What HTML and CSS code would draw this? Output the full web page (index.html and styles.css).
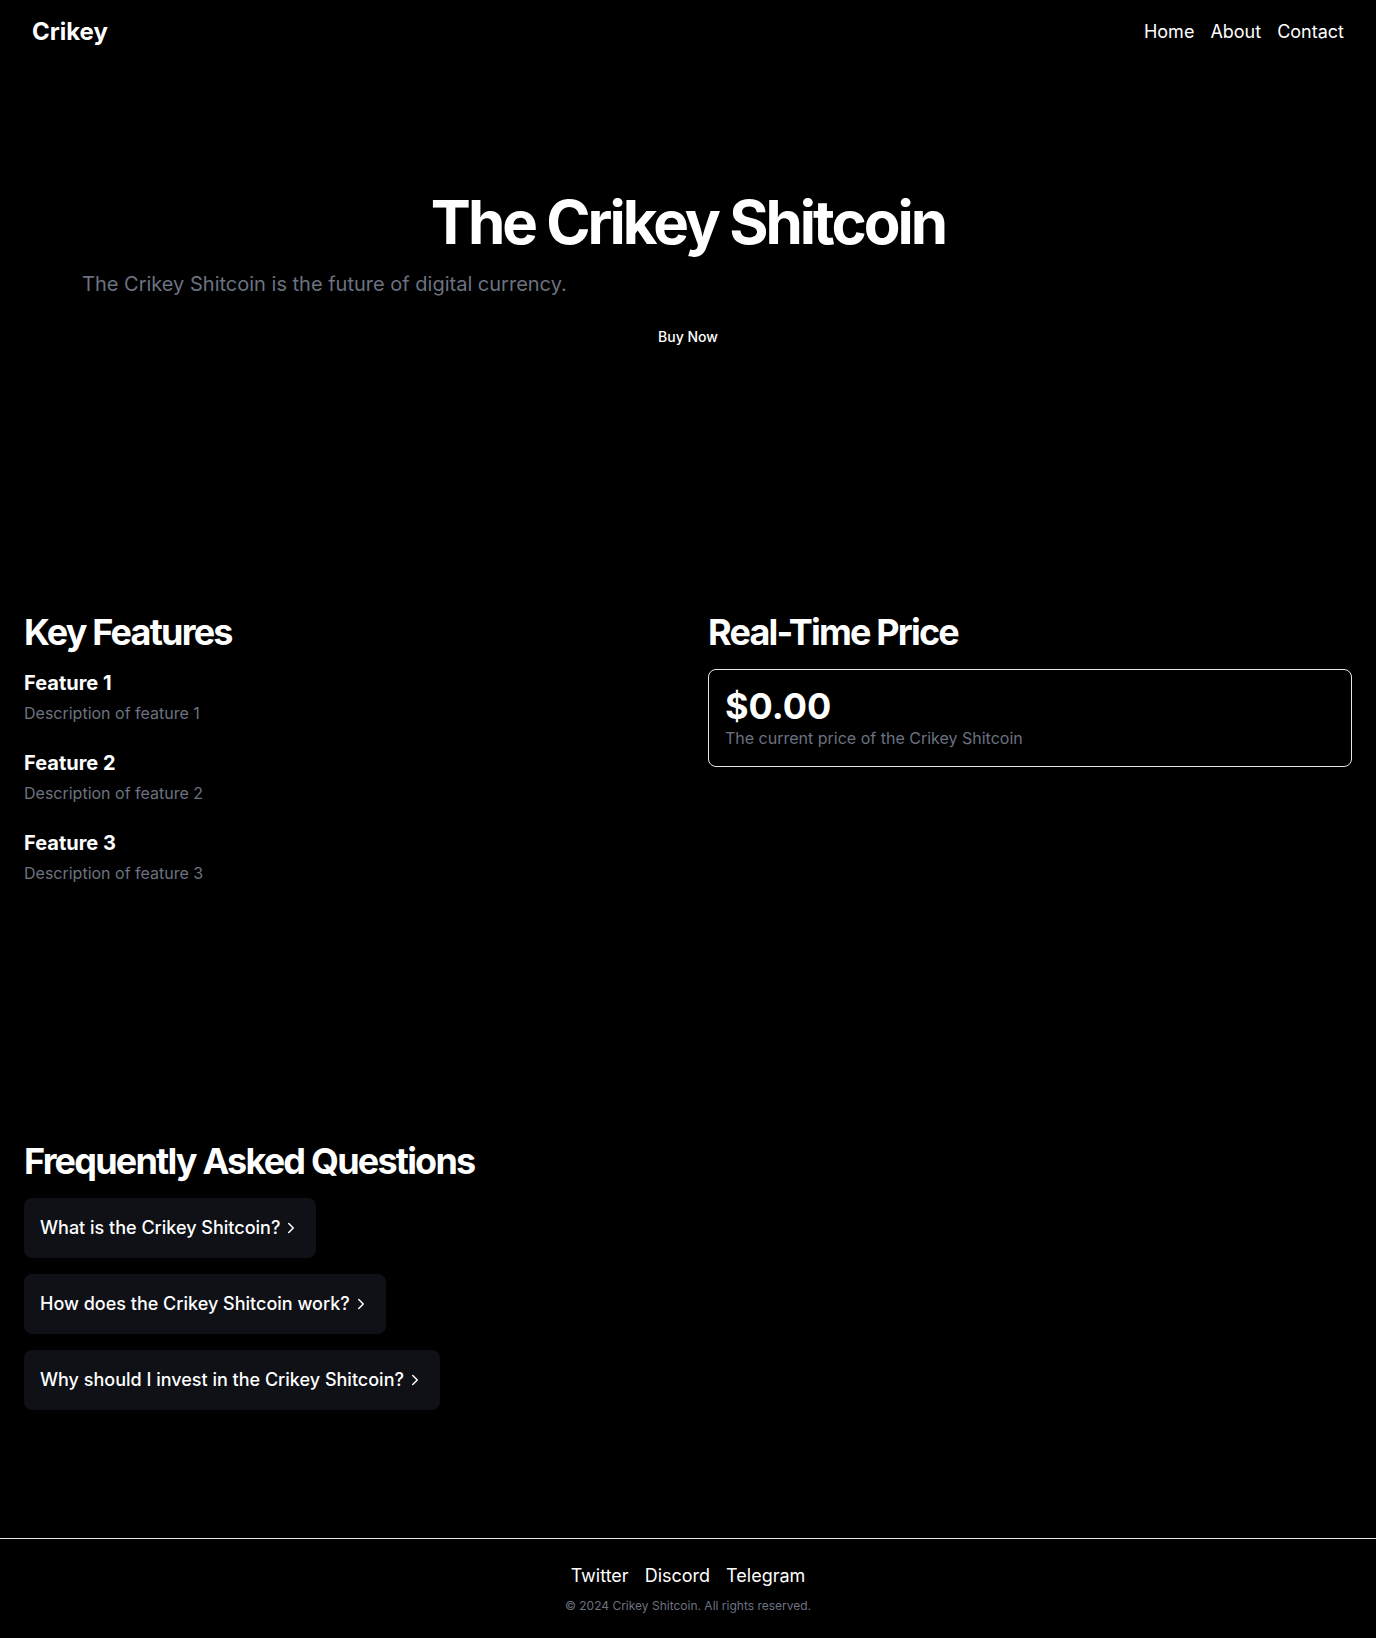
FILE: index.html
```html
<!DOCTYPE html>
<html lang="en">
<head>
<meta charset="utf-8">
<title>Crikey</title>
<link rel="stylesheet" href="styles.css">
</head>
<body>
<header class="topbar">
  <a class="brand" href="#">Crikey</a>
  <nav class="nav">
    <a href="#">Home</a>
    <a href="#">About</a>
    <a href="#">Contact</a>
  </nav>
</header>
<main>
  <section class="section hero">
    <h1 class="hero-title">The Crikey Shitcoin</h1>
    <p class="hero-sub">The Crikey Shitcoin is the future of digital currency.</p>
    <div class="hero-actions"><button class="buy">Buy Now</button></div>
  </section>
  <section class="section split">
    <div class="col">
      <h2 class="heading">Key Features</h2>
      <div class="features">
        <div class="feature">
          <h3>Feature 1</h3>
          <p>Description of feature 1</p>
        </div>
        <div class="feature">
          <h3>Feature 2</h3>
          <p>Description of feature 2</p>
        </div>
        <div class="feature">
          <h3>Feature 3</h3>
          <p>Description of feature 3</p>
        </div>
      </div>
    </div>
    <div class="col">
      <h2 class="heading">Real-Time Price</h2>
      <div class="price-card">
        <div class="price">$0.00</div>
        <p class="price-caption">The current price of the Crikey Shitcoin</p>
      </div>
    </div>
  </section>
  <section class="section faq">
    <h2 class="heading">Frequently Asked Questions</h2>
    <div class="faq-list">
      <button class="faq-item">What is the Crikey Shitcoin?<svg class="chev" viewBox="0 0 24 24" width="18" height="18" fill="none" stroke="currentColor" stroke-width="2" stroke-linecap="round" stroke-linejoin="round"><path d="m9 18 6-6-6-6"/></svg></button>
      <button class="faq-item">How does the Crikey Shitcoin work?<svg class="chev" viewBox="0 0 24 24" width="18" height="18" fill="none" stroke="currentColor" stroke-width="2" stroke-linecap="round" stroke-linejoin="round"><path d="m9 18 6-6-6-6"/></svg></button>
      <button class="faq-item">Why should I invest in the Crikey Shitcoin?<svg class="chev" viewBox="0 0 24 24" width="18" height="18" fill="none" stroke="currentColor" stroke-width="2" stroke-linecap="round" stroke-linejoin="round"><path d="m9 18 6-6-6-6"/></svg></button>
    </div>
  </section>
</main>
<footer class="footer">
  <nav class="footer-links">
    <a href="#">Twitter</a>
    <a href="#">Discord</a>
    <a href="#">Telegram</a>
  </nav>
  <p class="copy">© 2024 Crikey Shitcoin. All rights reserved.</p>
</footer>
</body>
</html>
```
FILE: styles.css
```css
* { box-sizing: border-box; }
html, body { margin: 0; padding: 0; }
body {
  background: #000;
  color: #fff;
  font-family: Inter, "Noto Sans", sans-serif;
}
a { color: inherit; text-decoration: none; }
h1, h2, h3, p { margin: 0; }

.topbar {
  height: 64px;
  padding: 0 32px;
  display: flex;
  align-items: center;
  justify-content: space-between;
}
.brand {
  font-size: 24px;
  font-weight: 700;
  line-height: 30px;
}
.nav {
  display: flex;
  gap: 16px;
  font-size: 18px;
  line-height: 28px;
}

.section { padding: 128px 24px; }

.hero { text-align: center; }
.hero-title {
  font-size: 60px;
  line-height: 60px;
  font-weight: 700;
  letter-spacing: -0.05em;
}
.hero-sub {
  max-width: 1212px;
  margin: 18px auto 0;
  text-align: left;
  color: #6b7280;
  font-size: 20px;
  line-height: 28px;
}
.hero-actions { margin-top: 18px; display: flex; justify-content: center; }
.buy {
  height: 40px;
  padding: 0 16px;
  background: #000;
  color: #fff;
  border: 0;
  font-family: inherit;
  font-size: 14px;
  font-weight: 500;
}

.split {
  display: grid;
  grid-template-columns: 1fr 1fr;
  gap: 40px;
}
.heading {
  font-size: 36px;
  line-height: 40px;
  font-weight: 700;
  letter-spacing: -0.05em;
  margin-bottom: 17px;
}
.features { display: flex; flex-direction: column; gap: 24px; }
.feature h3 { font-size: 20px; line-height: 28px; font-weight: 700; }
.feature p { margin-top: 4px; color: #6b7280; font-size: 16px; line-height: 24px; }

.price-card {
  border: 1px solid #e5e7eb;
  border-radius: 8px;
  padding: 16px;
}
.price { font-size: 36px; line-height: 40px; font-weight: 700; }
.price-caption { color: #6b7280; font-size: 16px; line-height: 24px; }

.faq-list { display: flex; flex-direction: column; align-items: flex-start; gap: 16px; }
.faq-item {
  display: inline-flex;
  align-items: center;
  gap: 2px;
  padding: 16px;
  background: #0f1117;
  color: #fff;
  border: 0;
  border-radius: 8px;
  font-family: inherit;
  font-size: 18px;
  line-height: 28px;
  font-weight: 500;
}
.chev { flex: none; }

.footer {
  border-top: 1px solid #e5e7eb;
  padding: 23px 24px 24px;
  text-align: center;
}
.footer-links {
  display: flex;
  justify-content: center;
  gap: 16px;
  font-size: 18px;
  line-height: 28px;
}
.copy {
  margin-top: 8px;
  color: #6b7280;
  font-size: 12px;
  line-height: 16px;
}
```
